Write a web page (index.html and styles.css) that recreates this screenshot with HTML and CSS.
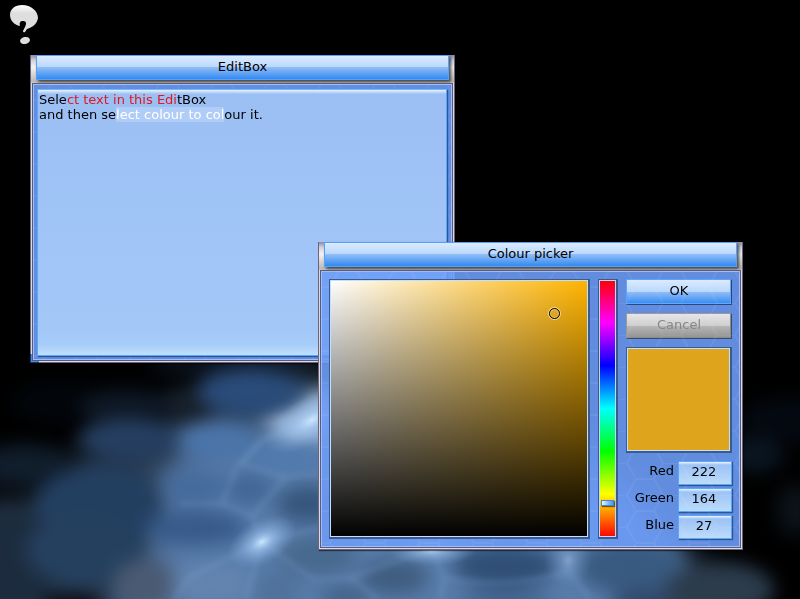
FILE: index.html
```html
<!DOCTYPE html>
<html lang="en">
<head>
<meta charset="utf-8">
<title>Colour picker</title>
<link rel="stylesheet" href="styles.css">
</head>
<body>
<svg class="backdrop" viewBox="0 0 800 599" preserveAspectRatio="xMidYMax slice" aria-hidden="true">
  <defs>
    <filter id="soft" x="-50%" y="-50%" width="200%" height="200%" color-interpolation-filters="sRGB"><feGaussianBlur stdDeviation="9"/></filter>
    <filter id="wide" x="-50%" y="-50%" width="200%" height="200%" color-interpolation-filters="sRGB"><feGaussianBlur stdDeviation="18"/></filter>
    <filter id="fine" x="-50%" y="-50%" width="200%" height="200%" color-interpolation-filters="sRGB"><feGaussianBlur stdDeviation="3"/></filter>
    <radialGradient id="spark"><stop offset="0" stop-color="#cbe6ff"/><stop offset=".3" stop-color="#a4c8f2" stop-opacity=".7"/><stop offset="1" stop-color="#7ba3d4" stop-opacity="0"/></radialGradient>
  </defs>
  <rect width="800" height="599" fill="#000"/>
  <path d="M-30 500 L30 505 L70 465 L150 425 L250 370 L320 360 L320 640 L-30 640Z" fill="#283a50" filter="url(#wide)"/>
  <path d="M160 480 L190 440 L260 425 L290 400 L500 390 L640 500 L690 560 L700 640 L110 640 L150 550Z" fill="#587caa" filter="url(#wide)"/>
  <path d="M260 420 L330 385 L330 440 L290 440Z" fill="#a5bcd8" filter="url(#soft)"/>
  <g filter="url(#soft)">
    <ellipse cx="58" cy="402" rx="46" ry="20" fill="#02060b"/>
    <ellipse cx="125" cy="407" rx="46" ry="18" fill="#0e1825"/>
    <ellipse cx="190" cy="403" rx="26" ry="14" fill="#17202b"/>
    <ellipse cx="230" cy="367" rx="80" ry="9" fill="#0e1825"/>
    <ellipse cx="24" cy="466" rx="50" ry="22" fill="#101d2b"/>
    <ellipse cx="250" cy="392" rx="52" ry="23" fill="#2a4c7a"/>
    <ellipse cx="128" cy="440" rx="50" ry="21" fill="#263f61"/>
    <ellipse cx="10" cy="560" rx="56" ry="50" fill="#1c2c3e"/>
    <ellipse cx="98" cy="506" rx="62" ry="40" fill="#233f60"/>
    <ellipse cx="84" cy="550" rx="58" ry="36" fill="#25405f"/>
    <ellipse cx="145" cy="585" rx="32" ry="26" fill="#4a5a72"/>
    <ellipse cx="72" cy="604" rx="32" ry="10" fill="#08070b"/>
    <ellipse cx="218" cy="442" rx="40" ry="19" fill="#4b75aa"/>
    <ellipse cx="286" cy="459" rx="32" ry="14" fill="#507aae"/>
    <ellipse cx="196" cy="487" rx="32" ry="16" fill="#446a9b"/>
    <ellipse cx="250" cy="489" rx="22" ry="16" fill="#416696"/>
    <ellipse cx="308" cy="504" rx="32" ry="19" fill="#36567c"/>
    <ellipse cx="196" cy="528" rx="50" ry="18" fill="#375a8a"/>
    <ellipse cx="214" cy="584" rx="42" ry="20" fill="#6384af"/>
    <ellipse cx="276" cy="590" rx="24" ry="18" fill="#4f719b"/>
    <ellipse cx="318" cy="556" rx="40" ry="20" fill="#48698e"/>
    <ellipse cx="395" cy="577" rx="34" ry="18" fill="#3f5d7f"/>
    <ellipse cx="344" cy="597" rx="24" ry="9" fill="#3d5c80"/>
    <ellipse cx="505" cy="566" rx="52" ry="22" fill="#304f76"/>
    <ellipse cx="505" cy="600" rx="48" ry="8" fill="#3c5e87"/>
    <ellipse cx="630" cy="567" rx="52" ry="28" fill="#395a80"/>
    <ellipse cx="670" cy="604" rx="60" ry="16" fill="#30496b"/>
    <ellipse cx="720" cy="590" rx="54" ry="28" fill="#2c3c4d"/>
    <ellipse cx="752" cy="455" rx="32" ry="18" fill="#0a1521"/>
    <ellipse cx="790" cy="420" rx="50" ry="22" fill="#040911"/>
    <ellipse cx="796" cy="510" rx="20" ry="26" fill="#0c1218"/>
  </g>
  <g fill="none" stroke="#8db2df" stroke-width="3" filter="url(#fine)" opacity=".3">
    <path d="M240 464 L286 477 L320 474 M238 464 L222 504 L252 516 L286 477 M180 504 L222 504 M252 516 L262 542 L320 528 M262 542 L190 577 L174 599 M262 542 L314 580 L350 578 L432 548 M262 542 L246 599 M352 579 L378 599 M432 548 L444 578 L440 599 M570 558 L568 570 L590 599 M444 578 Q505 590 568 572"/>
    <path d="M280 420 L310 430 L320 440 M240 464 L262 440 L305 425" stroke-width="5"/>
  </g>
  <ellipse cx="312" cy="420" rx="54" ry="24" fill="url(#spark)" transform="rotate(-30 312 420)"/>
  <ellipse cx="262" cy="542" rx="38" ry="22" fill="url(#spark)" transform="rotate(-30 262 542)"/>
  <ellipse cx="432" cy="550" rx="44" ry="16" fill="url(#spark)" opacity=".8"/>
  <ellipse cx="568" cy="560" rx="24" ry="28" fill="url(#spark)" opacity=".35"/>
</svg>

<svg class="pointer" viewBox="0 0 32 42" role="img" aria-label="Help">
  <defs><linearGradient id="shine" x2="0" y2="1"><stop offset="0" stop-color="#fff"/><stop offset=".3" stop-color="#dedede"/><stop offset="1" stop-color="#e0e0e0"/></linearGradient></defs>
  <path d="M14 1 C23 1 30 7 30 14 C29 20 25 23 19 25 L17 28 Q15 29 15 27 L17 23 C19 19 18 17 15 17 C12 17 11 19 12 22 C6 21 2 16 2 11 C2 5 7 1 14 1Z" fill="url(#shine)"/>
  <ellipse cx="17" cy="36.500" rx="5" ry="3.500" fill="#dedede" transform="rotate(-12 17 36.500)"/>
</svg>

<main class="desktop">
  <section class="window window-edit" aria-labelledby="edit-title">
    <header class="strip"><h1 class="title" id="edit-title">EditBox</h1></header>
    <div class="frame">
      <div class="pane pane-edit">
        <svg class="mesh" aria-hidden="true">
          <defs><pattern id="hex" width="54" height="32" patternUnits="userSpaceOnUse"><path d="M0 16 H9 L18 0 H36 L45 16 H54 M9 16 L18 32 M45 16 L36 32" fill="none" stroke="#fff" stroke-width="2"/></pattern></defs>
          <rect width="100%" height="100%" fill="url(#hex)"/>
        </svg>
        <div class="edit" role="textbox" aria-multiline="true" aria-labelledby="edit-title" contenteditable="true" spellcheck="false">Sele<span class="red">ct text in this Edi</span>tBox<br>and then se<span class="selected">lect colour to col</span>our it.</div>
      </div>
    </div>
    <span class="grip"></span>
  </section>

  <section class="window window-picker" aria-labelledby="picker-title">
    <header class="strip"><h2 class="title" id="picker-title">Colour picker</h2></header>
    <div class="frame">
      <form class="pane pane-picker">
        <svg class="mesh" aria-hidden="true"><rect width="100%" height="100%" fill="url(#hex)"/></svg>
        <div class="well shade"><span class="marker"></span></div>
        <input class="well hue" type="range" min="0" max="360" value="316" aria-label="Hue">
        <div class="side">
          <button class="button" type="button">OK</button>
          <button class="button" type="button" disabled>Cancel</button>
          <div class="well swatch"></div>
          <div class="channels">
            <label for="red">Red</label><input class="field" id="red" type="text" value="222">
            <label for="green">Green</label><input class="field" id="green" type="text" value="164">
            <label for="blue">Blue</label><input class="field" id="blue" type="text" value="27">
          </div>
        </div>
      </form>
    </div>
  </section>
</main>
</body>
</html>
```
FILE: styles.css
```css
* { box-sizing: border-box; }

body {
  margin: 0;
  min-height: 100vh;
  overflow: hidden;
  background: #000;
  color: #000;
  font: 13px/15px "DejaVu Sans", sans-serif;
}

.backdrop {
  position: fixed;
  inset: 0;
  width: 100%;
  height: 100%;
}

.pointer {
  position: absolute;
  left: 8px;
  top: 4px;
  width: 32px;
  height: 42px;
}

/* Windows */

.window {
  position: absolute;
  width: 425px;
  border: 1px solid #6b657c;
  box-shadow: 1px 1px 1px #0008;
}

.window-edit { left: 30px; top: 55px; }
.window-picker { left: 318px; top: 242px; }

.strip {
  height: 27px;
  margin-top: -1px;
  padding: 0 5px;
  box-sizing: content-box;
  background: linear-gradient(#8a88a8, #d4d2de 20%, #f4f2f4 45%, #bab8b4);
  border-bottom: 1px solid #c8c6c2;
}

.title {
  height: 25px;
  margin: 0;
  padding-top: 3px;
  border: 1px solid #54a0fa;
  background: linear-gradient(#dcebff, #b9d7fb 49%, #90bdf6 50%, #3389f3);
  box-shadow: 2px 2px 3px #000a;
  font: inherit;
  text-align: center;
}

.frame {
  border: 1px solid #ddd8e2;
  border-top: 0;
}

.pane {
  position: relative;
  border: 1px solid #5c5a7c;
  background: rgba(109, 156, 247, .9);
  box-shadow: inset 0 0 0 1px #9cbcfb;
}

.mesh {
  position: absolute;
  inset: 0;
  width: 100%;
  height: 100%;
  opacity: .05;
}

.pane-edit { padding: 5px 5px 4px 4px; }

.edit {
  position: relative;
  min-height: 267px;
  padding: 2px 1px;
  border: 1px solid #5aa6fa;
  border-top-color: #78b4fa;
  background:
    linear-gradient(#e4f3ff, #9cc2f5) top / 100% 4px no-repeat,
    linear-gradient(#9bbff3, #a3c8f8 90%, #a6ccf9 96%, #c2e0fb);
  box-shadow: 1px 1px 1px #2d5596;
  outline: 0;
}

.red { color: #e01822; }

.selected {
  color: #fff;
  background: #b0cdf8;
}

.grip {
  position: absolute;
  left: -1px;
  bottom: -1px;
  width: 9px;
  height: 9px;
  border: solid #20375c;
  border-width: 0 0 1px 1px;
  box-shadow: inset 1px -1px #3f8eea;
}

/* Picker */

.pane-picker {
  display: grid;
  grid-template-columns: 1fr 20px 106px;
  gap: 8px;
  padding: 8px;
}

.well {
  position: relative;
  border: 1px solid #3c5a8c;
  border-width: 1px 2px 2px 1px;
  box-shadow: inset 0 0 0 1px #b8dcff;
}

.shade {
  background:
    linear-gradient(#0000, #000),
    linear-gradient(to right, #fff, #ffb400);
}

.shade::after,
.swatch::after {
  content: "";
  position: absolute;
  inset: 0;
  border: 1px solid #c0e0ff;
}

.marker {
  position: absolute;
  left: 87%;
  top: 13%;
  width: 11px;
  height: 11px;
  margin: -5px 0 0 -5px;
  border: 1px solid #000;
  border-radius: 50%;
  box-shadow: 0 0 0 1px #fff8, inset 0 0 0 1px #fff6;
}

.hue {
  appearance: none;
  writing-mode: vertical-lr;
  width: 20px;
  height: 100%;
  min-height: 0;
  margin: 0;
  padding: 1px;
  background: linear-gradient(#f00, #f0f, #00f, #0ff, #0f0, #ff0, #f00);
}

.hue::-webkit-slider-thumb {
  appearance: none;
  width: 13px;
  height: 6px;
  border: 1px solid #3c86e4;
  background: linear-gradient(to right, #e8f4ff, #88b8f8 60%, #4a94f4);
  box-shadow: 1px 1px 1px #0008;
}

.side {
  display: flex;
  flex-direction: column;
  gap: 8px;
}

.button {
  height: 26px;
  padding: 0 0 3px;
  border: 1px solid #5aa6fa;
  border-color: #5aa6fa #27477e #27477e #5aa6fa;
  background: linear-gradient(#dcebff, #b9d7fb 49%, #90bdf6 50%, #3389f3);
  box-shadow: inset -1px -1px #5aa6fa;
  color: #000;
  font: inherit;
}

.button:disabled {
  border-color: #999 #3a4c6c #3a4c6c #999;
  background: linear-gradient(#e6e6e6, #cecece 49%, #b6b6b6 50%, #929292);
  box-shadow: inset -1px -1px #8c8c8c;
  color: #868686;
}

.swatch {
  height: 106px;
  background: #dea41b;
}

.channels {
  display: grid;
  grid-template-columns: 1fr 54px;
  gap: 3px 4px;
}

.channels label {
  padding-top: 2px;
  text-align: right;
}

.field {
  width: 100%;
  height: 24px;
  padding: 0 2px 3px 0;
  border: 1px solid #5aa6fa;
  background:
    linear-gradient(#e8f5ff, #9cc2f5) top / 100% 3px no-repeat,
    linear-gradient(#98bef4, #bcdcfb);
  box-shadow: 1px 1px 1px #2d5596;
  color: #000;
  font: inherit;
  text-align: center;
}
```
